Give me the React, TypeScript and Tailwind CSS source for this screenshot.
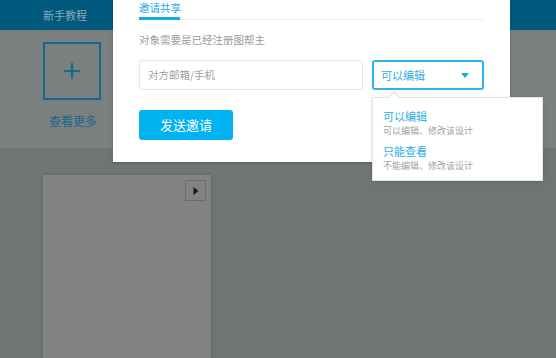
import React from 'react';

const font = { fontFamily: '"Noto Sans CJK SC", "Noto Sans", sans-serif' };

function Background() {
  return (
    <div className="flex flex-col w-full h-full">
      <div className="h-[30px] bg-[#005a7d] flex items-center pl-[43px] shrink-0">
        <span className="text-[11px] leading-none text-[#8aa8b6]">新手教程</span>
      </div>
      <div className="h-[118px] bg-[#7b7f80] shrink-0 pl-[43px] pt-[12px]">
        <div className="w-[58px] h-[58px] border-2 border-[#16698b] flex items-center justify-center">
          <svg width="18" height="18" viewBox="0 0 18 18">
            <path d="M9 1v16M1 9h16" stroke="#16698b" strokeWidth="2.2" fill="none" />
          </svg>
        </div>
        <div className="mt-[13px] pl-[6px] text-[12px] leading-[16px] text-[#16698b]">查看更多</div>
      </div>
      <div className="flex-1 bg-[#707475] pl-[43px] pt-[27px]">
        <div className="w-[168px] h-[200px] bg-[#838383] shadow-[0_0_3px_rgba(0,0,0,0.15)] flex justify-end pt-[5px] pr-[5px]">
          <div className="w-[21px] h-[21px] border border-[#6c6c6c] flex items-center justify-center">
            <svg width="8" height="10" viewBox="0 0 8 10">
              <path d="M1.5 1l5 4-5 4z" fill="#1a1a1a" />
            </svg>
          </div>
        </div>
      </div>
    </div>
  );
}

function Dropdown() {
  return (
    <div className="absolute left-[372px] top-[97px] w-[171px] h-[84px] bg-white border border-[#e2e2e2] shadow-[0_1px_4px_rgba(0,0,0,0.12)] pt-[10px] pl-[10px]">
      <div className="absolute -top-[5px] left-[17px] w-[8px] h-[8px] bg-white border-l border-t border-[#e2e2e2] rotate-45" />
      <div className="text-[11px] leading-[16px] text-[#2aaee5]">可以编辑</div>
      <div className="text-[9px] leading-[13px] text-[#a3a3a3]">可以编辑、修改该设计</div>
      <div className="mt-[6px] text-[11px] leading-[16px] text-[#2aaee5]">只能查看</div>
      <div className="text-[9px] leading-[13px] text-[#a3a3a3]">不能编辑、修改该设计</div>
    </div>
  );
}

function Modal() {
  return (
    <div className="absolute left-[113px] top-0 w-[397px] bg-white px-[26px] pb-[22px] shadow-[0_1px_3px_rgba(0,0,0,0.2)]">
      <div className="flex h-[20px] border-b border-[#ececec]">
        <div className="w-[41px] border-b-[3px] border-[#17a9e6] -mb-px text-[10.5px] leading-[16px] text-[#17a9e6] whitespace-nowrap">
          邀请共享
        </div>
      </div>
      <div className="mt-[12px] text-[10.5px] leading-[16px] text-[#9a9a9a]">对象需要是已经注册图帮主</div>
      <div className="mt-[12px] flex gap-[9px]">
        <div className="w-[224px] h-[30px] border border-[#e6e6e6] rounded-[3px] flex items-center pl-[8px] text-[10.5px] text-[#9f9f9f]">
          对方邮箱/手机
        </div>
        <div className="w-[112px] h-[30px] border-2 border-[#2ab4ee] rounded-[3px] flex items-center justify-between pl-[7px] pr-[13px]">
          <span className="text-[11px] text-[#2aaee5]">可以编辑</span>
          <svg width="8" height="5" viewBox="0 0 8 5">
            <path d="M0 0h8L4 5z" fill="#1aa6e3" />
          </svg>
        </div>
      </div>
      <div className="mt-[20px] w-[94px] h-[30px] rounded-[3px] bg-[#00b3f0] flex items-center justify-center text-[13px] text-white">
        发送邀请
      </div>
    </div>
  );
}

export default function App() {
  return (
    <div className="relative w-[556px] h-[358px] overflow-hidden" style={font}>
      <Background />
      <Modal />
      <Dropdown />
    </div>
  );
}
